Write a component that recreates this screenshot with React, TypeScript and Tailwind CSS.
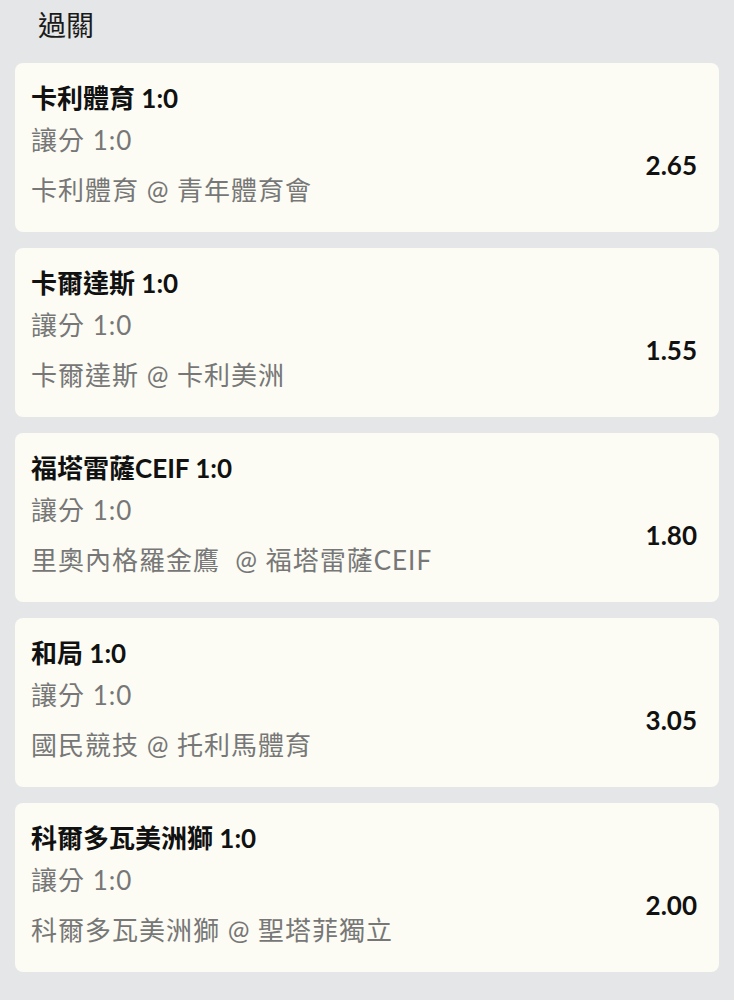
import React from "react";

const items = [
  { title: "卡利體育 1:0", sub: "讓分 1:0", match: "卡利體育 @ 青年體育會", odds: "2.65" },
  { title: "卡爾達斯 1:0", sub: "讓分 1:0", match: "卡爾達斯 @ 卡利美洲", odds: "1.55" },
  { title: "福塔雷薩CEIF 1:0", sub: "讓分 1:0", match: "里奧內格羅金鷹  @ 福塔雷薩CEIF", odds: "1.80" },
  { title: "和局 1:0", sub: "讓分 1:0", match: "國民競技 @ 托利馬體育", odds: "3.05" },
  { title: "科爾多瓦美洲獅 1:0", sub: "讓分 1:0", match: "科爾多瓦美洲獅 @ 聖塔菲獨立", odds: "2.00" },
];

export default function App() {
  return (
    <div
      className="min-h-[1000px] w-[734px] bg-[#e5e6e8] px-[15px]"
      style={{ fontFamily: 'Lato, "Noto Sans CJK TC", sans-serif' }}
    >
      <div className="h-[63px] pl-[23px] pt-[7px] text-[28px] leading-[36px] text-[#1a1a1a]">過關</div>
      <div className="flex flex-col gap-[16px]">
        {items.map((it) => (
          <div
            key={it.title}
            className="flex h-[169px] flex-col rounded-[8px] bg-[#fcfcf4] pl-[16px] pr-[22px] pt-[19px]"
          >
            <div className="text-[26px] font-bold leading-[32px] text-[#111]">{it.title}</div>
            <div className="mt-[10px] flex items-center justify-between">
              <div className="flex flex-col text-[26px] leading-[32px] tracking-[1px] text-[#777]">
                <div>{it.sub}</div>
                <div className="mt-[18px] whitespace-pre">{it.match}</div>
              </div>
              <div className="text-[26px] font-bold leading-[32px] text-[#111]">{it.odds}</div>
            </div>
          </div>
        ))}
      </div>
    </div>
  );
}
